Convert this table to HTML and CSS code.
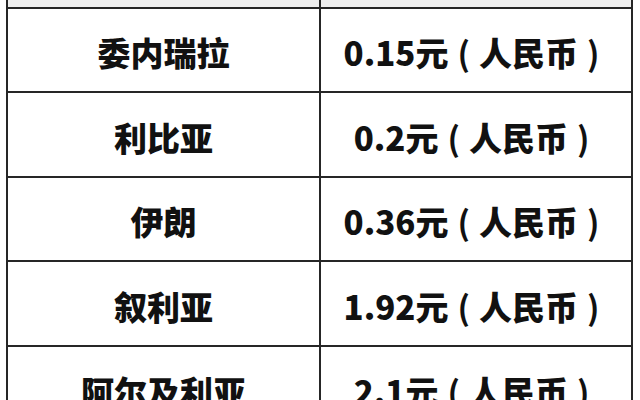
FILE: index.html
```html
<!DOCTYPE html>
<html lang="zh">
<head>
<meta charset="utf-8">
<link rel="stylesheet" href="styles.css">
</head>
<body>
<div class="grid">
  <div class="cap"></div><div class="cap"></div>
  <div class="cell">委内瑞拉</div><div class="cell">0.15元<span class="p">(</span>人民币<span class="p">)</span></div>
  <div class="cell">利比亚</div><div class="cell">0.2元<span class="p">(</span>人民币<span class="p">)</span></div>
  <div class="cell">伊朗</div><div class="cell">0.36元<span class="p">(</span>人民币<span class="p">)</span></div>
  <div class="cell">叙利亚</div><div class="cell">1.92元<span class="p">(</span>人民币<span class="p">)</span></div>
  <div class="cell">阿尔及利亚</div><div class="cell">2.1元<span class="p">(</span>人民币<span class="p">)</span></div>
</div>
</body>
</html>
```
FILE: styles.css
```css
html, body {
  margin: 0;
  padding: 0;
  background: #fff;
  overflow: hidden;
}
.grid {
  display: grid;
  grid-template-columns: 311px 310px;
  grid-template-rows: 7px 82px 83px 82px 83px 83px;
  gap: 2px;
  padding: 0 2px;
  margin-left: 6px;
  width: fit-content;
  background: #262626;
}
.cap {
  background: #efefef;
}
.cell {
  background: #fff;
  display: flex;
  align-items: center;
  justify-content: center;
  font-family: "Noto Sans CJK SC", "Noto Sans", sans-serif;
  font-weight: 900;
  font-size: 33px;
  color: #111;
  padding-top: 4px;
  box-sizing: border-box;
  white-space: nowrap;
}
.p {
  margin: 0 9px;
  font-weight: 700;
}
```
